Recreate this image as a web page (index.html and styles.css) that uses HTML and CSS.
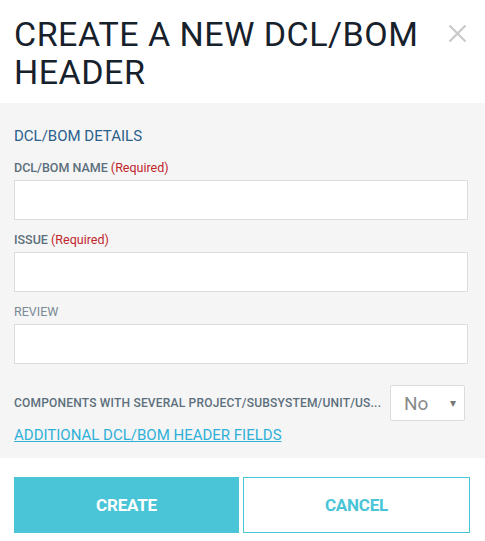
FILE: index.html
```
<!DOCTYPE html>
<html>
<head>
<meta charset="utf-8">
<link rel="stylesheet" href="styles.css">
</head>
<body>
<div class="modal">
  <div class="head">
    <h1 class="title">CREATE A NEW DCL/BOM HEADER</h1>
    <svg class="close" width="19" height="19" viewBox="0 0 19 19"><path d="M1.5 1.5 L17.5 17.5 M17.5 1.5 L1.5 17.5" stroke="#c9c9c9" stroke-width="2.2" fill="none"/></svg>
  </div>
  <div class="body">
    <div class="section">DCL/BOM DETAILS</div>
    <div class="field">
      <div class="label">DCL/BOM NAME <span class="req">(Required)</span></div>
      <div class="input"></div>
    </div>
    <div class="field">
      <div class="label">ISSUE <span class="req">(Required)</span></div>
      <div class="input"></div>
    </div>
    <div class="field">
      <div class="label light">REVIEW</div>
      <div class="input"></div>
    </div>
    <div class="row">
      <div class="label rowlabel">COMPONENTS WITH SEVERAL PROJECT/SUBSYSTEM/UNIT/US...</div>
      <div class="select"><span>No</span><span class="arrow">&#x25BE;</span></div>
    </div>
    <a class="link">ADDITIONAL DCL/BOM HEADER FIELDS</a>
  </div>
  <div class="foot">
    <div class="btn primary">CREATE</div>
    <div class="btn outline">CANCEL</div>
  </div>
</div>
</body>
</html>
```
FILE: styles.css
```
html, body { margin: 0; padding: 0; background: #fff; }
body { font-family: Roboto, "Noto Sans", sans-serif; width: 485px; }
.modal { display: flex; flex-direction: column; }
.head { display: flex; justify-content: space-between; align-items: flex-start; padding: 15px 18px 17px 14px; height: 71px; }
.title { margin: 0; font-weight: 400; font-size: 34px; line-height: 38px; color: #17212c; width: 420px; letter-spacing: 0.5px; }
.close { margin-top: 9px; }
.body { background: #f5f5f5; padding: 25px 17px 15px 14px; display: flex; flex-direction: column; }
.section { color: #2b5f8c; font-size: 15px; line-height: 16px; margin-bottom: 17px; }
.field { display: flex; flex-direction: column; margin-bottom: 13px; }
.label { color: #5c6f7c; font-size: 12.5px; font-weight: 500; line-height: 14px; margin-bottom: 5px; }
.label.light { font-weight: 400; color: #7a8a96; }
.req { color: #c0272d; font-weight: 400; }
.input { height: 38px; background: #fff; border: 1px solid #dcdcdc; }
.row { display: flex; justify-content: space-between; align-items: center; margin-top: 8px; margin-right: 3px; }
.rowlabel { font-size: 12px; margin: 0; letter-spacing: 0.2px; }
.select { background: #fff; border: 1px solid #dcdcdc; border-radius: 2px; display: flex; align-items: center; justify-content: space-between; padding: 0 8px 0 13px; box-sizing: border-box; width: 75px; height: 36px; color: #8a8a8a; font-size: 19px; }
.arrow { font-size: 12px; color: #777; }
.link { color: #2fb0d8; text-decoration: underline; font-size: 15px; line-height: 16px; margin-top: 6px; }
.foot { display: flex; gap: 4px; padding: 19px 15px 9px 14px; }
.btn { flex: 1; height: 56px; display: flex; align-items: center; justify-content: center; font-size: 17px; font-weight: 700; box-sizing: border-box; letter-spacing: -0.2px; }
.primary { background: #49c5d7; color: #fff; }
.outline { border: 1px solid #49c5d7; color: #49c5d7; background: #fff; }
```
